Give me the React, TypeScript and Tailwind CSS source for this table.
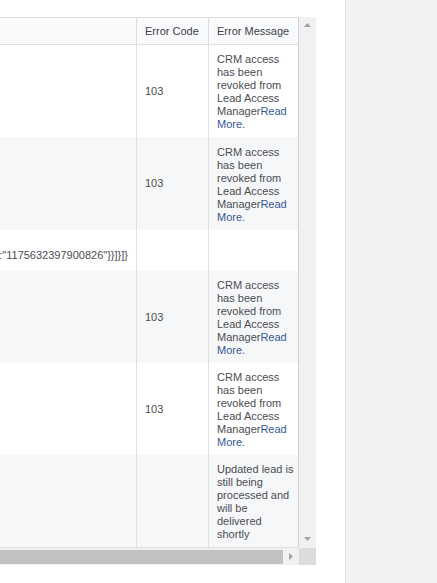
import * as React from 'react';

type Row = {
  h: string;
  bg: string;
  code?: string;
  json?: string;
  message?: 'crm' | 'pending';
};

const rows: Row[] = [
  { h: 'h-[92px]', bg: 'bg-white', code: '103', message: 'crm' },
  { h: 'h-[93px]', bg: 'bg-[#f6f7f9]', code: '103', message: 'crm' },
  { h: 'h-[41px]', bg: 'bg-white', json: '{"field_data":[{"name":"lead","values":[{"form_id":"1175632397900826"}}]}]}' },
  { h: 'h-[92px]', bg: 'bg-[#f6f7f9]', code: '103', message: 'crm' },
  { h: 'h-[92px]', bg: 'bg-white', code: '103', message: 'crm' },
  { h: 'h-[92px]', bg: 'bg-[#f6f7f9]', message: 'pending' },
];

function Message({ kind }: { kind?: Row['message'] }) {
  if (kind === 'crm') {
    return (
      <p>
        CRM access has been revoked from Lead Access Manager
        <a className="text-[#365899]">Read More.</a>
      </p>
    );
  }
  if (kind === 'pending') {
    return <p>Updated lead is still being processed and will be delivered shortly</p>;
  }
  return null;
}

function Arrow({ dir }: { dir: 'up' | 'down' | 'right' }) {
  const points = dir === 'up' ? '0,4 7,4 3.5,0' : dir === 'down' ? '0,0 7,0 3.5,4' : '0,0 0,7 4,3.5';
  const w = dir === 'right' ? 4 : 7;
  const h = dir === 'right' ? 7 : 4;
  return (
    <svg width={w} height={h} viewBox={`0 0 ${w} ${h}`}>
      <polygon points={points} fill="#a3a3a3" />
    </svg>
  );
}

export default function App() {
  return (
    <div className="flex h-[583px] w-[437px] bg-white font-['Liberation_Sans',Arial,sans-serif] text-[11px] leading-[13px] text-[#4a4d52]">
      <div className="w-[345px] pt-[17px]">
        <div className="flex">
          <div className="w-[299px] overflow-hidden">
            {/* header */}
            <div className="flex h-[28px] border-y border-[#dddfe2] bg-[#f9fafb] text-[#3e4147]">
              <div className="w-[137px] shrink-0 border-r border-[#dddfe2]" />
              <div className="flex w-[72px] shrink-0 items-center border-r border-[#dddfe2] pl-2">Error Code</div>
              <div className="flex w-[90px] shrink-0 items-center border-r border-[#cccfd4] pl-2">Error Message</div>
            </div>
            {rows.map((row, i) => (
              <div key={i} className={`flex ${row.h} ${row.bg}`}>
                <div className="flex w-[137px] shrink-0 justify-end overflow-hidden border-r border-[#dddfe2] pr-2 pt-[19px] whitespace-nowrap">
                  {row.json}
                </div>
                <div className="flex w-[72px] shrink-0 items-center border-r border-[#dddfe2] pl-2">{row.code}</div>
                <div className="flex w-[90px] shrink-0 items-center border-r border-[#cccfd4] pl-2 pr-[4px] pt-[2px]">
                  <Message kind={row.message} />
                </div>
              </div>
            ))}
            <div className="h-px bg-[#dddfe2]" />
          </div>
          {/* vertical scrollbar */}
          <div className="flex w-[17px] flex-col items-center justify-between bg-[#f1f1f1] pb-[7px] pt-[6px]">
            <Arrow dir="up" />
            <Arrow dir="down" />
          </div>
        </div>
        {/* horizontal scrollbar */}
        <div className="flex h-[17px]">
          <div className="flex w-[299px] items-center bg-[#f1f1f1]">
            <div className="h-[14px] w-[283px] bg-[#c1c1c1]" />
            <div className="flex flex-1 justify-center">
              <Arrow dir="right" />
            </div>
          </div>
          <div className="w-[17px] bg-[#dcdcdc]" />
        </div>
      </div>
      <div className="flex-1 border-l border-[#e3e3e3] bg-[#f2f2f2]" />
    </div>
  );
}
